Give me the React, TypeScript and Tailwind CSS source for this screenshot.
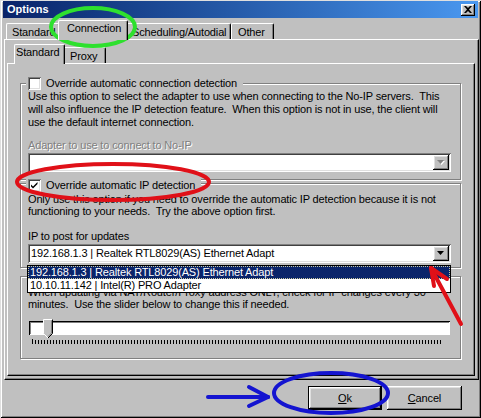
import React from 'react';

const raised =
  'shadow-[inset_-1px_-1px_#000000,inset_1px_1px_#ffffff,inset_-2px_-2px_#808080,inset_2px_2px_#dfdfdf]';
const sunken =
  'shadow-[inset_1px_1px_#808080,inset_-1px_-1px_#ffffff,inset_2px_2px_#404040,inset_-2px_-2px_#dfdfdf]';
const etched = 'border border-[#808080] shadow-[1px_1px_0_#ffffff,inset_1px_1px_0_#ffffff]';

const Tab: React.FC<{ label: string; selected?: boolean; className: string }> = ({ label, selected, className }) => (
  <div
    className={`${className} ${
      selected ? 'relative z-10 h-[20px] -mb-px pt-[1px] bg-[#c0c0c0]' : 'h-[16px] pt-[2px]'
    } border-t border-l border-r border-t-white border-l-white border-r-[#000000] rounded-tl-[2px] rounded-tr-[2px] shadow-[inset_-1px_0_#808080] overflow-hidden whitespace-nowrap`}
  >
    {label}
  </div>
);

const Checkbox: React.FC<{ checked?: boolean }> = ({ checked }) => (
  <div className={`w-[13px] h-[13px] shrink-0 bg-white ${sunken}`}>
    {checked && (
      <svg width="13" height="13" viewBox="0 0 13 13">
        <path d="M3 5.5 L5 7.5 L9.5 3 L9.5 5 L5 9.5 L3 7.5 Z" fill="#000" />
      </svg>
    )}
  </div>
);

const Combo: React.FC<{ value?: string; disabled?: boolean }> = ({ value, disabled }) => (
  <div className={`h-[19px] bg-white ${sunken} flex items-center pl-[3px] pr-[2px]`}>
    <span className="flex-1 whitespace-nowrap overflow-hidden">{value}</span>
    <div className={`w-[16px] h-[15px] bg-[#c0c0c0] ${raised} flex items-center justify-center`}>
      <svg width="8" height="6" viewBox="0 0 8 6">
        {disabled && <path d="M1 1 H8 L4.5 5 Z" fill="#ffffff" />}
        <path d="M0 0 H7 L3.5 4 Z" fill={disabled ? '#808080' : '#000000'} />
      </svg>
    </div>
  </div>
);

const Ticks: React.FC = () => {
  const xs: number[] = [];
  for (let x = 0.5; x <= 411; x += 3) xs.push(x);
  return (
    <svg width="412" height="6" className="ml-[4px]">
      {xs.map((x, i) => (
        <line key={i} x1={x} x2={x} y1={i === 0 ? 0 : 1} y2={5} stroke="#000" strokeWidth="1" />
      ))}
    </svg>
  );
};

export default function App() {
  return (
    <div className="relative w-[481px] h-[418px] overflow-hidden bg-[#c0c0c0] font-['Liberation_Sans',Arial,sans-serif] text-[11px] leading-[13px] tracking-[-0.15px] text-black shadow-[inset_1px_1px_#dfdfdf,inset_-1px_-1px_#000000,inset_2px_2px_#ffffff,inset_-2px_-2px_#808080]">
      {/* title bar */}
      <div className="mx-[3px] mt-[1px] h-[17px] flex items-center justify-between pl-[4px] pr-[3px] bg-linear-to-r from-[#0a246a] to-[#4a98f0]">
        <span className="text-white font-bold tracking-normal">Options</span>
        <div className={`w-[14px] h-[12px] bg-[#c0c0c0] ${raised} flex items-center justify-center`}>
          <svg width="8" height="7" viewBox="0 0 8 7">
            <path d="M0 0 H2 L4 2 L6 0 H8 L5 3.5 L8 7 H6 L4 5 L2 7 H0 L3 3.5 Z" fill="#000" />
          </svg>
        </div>
      </div>

      {/* outer tabs */}
      <div className="flex items-end h-[21px] pl-[6px]">
        <Tab label="Standard" className="w-[54px] pl-[5px]" />
        <Tab label="Connection" selected className="w-[70px] -mx-[2px] pl-[8px]" />
        <Tab label="Scheduling/Autodial" className="w-[105px] pl-[5px]" />
        <Tab label="Other" className="w-[43px] pl-[6px]" />
      </div>

      {/* outer panel */}
      <div className="ml-[4px] w-[475px] h-[341px] flex flex-col border-t border-l border-r border-b border-t-white border-l-white border-r-[#000000] border-b-[#000000] shadow-[inset_-1px_-1px_#808080] pt-[5px] pl-[2px] pr-[3px] pb-[3px]">
        {/* inner tabs */}
        <div className="flex items-end h-[18px] pl-[9px]">
          <Tab label="Standard" selected className="w-[51px] -mx-[2px] pl-[1px]" />
          <Tab label="Proxy" className="w-[43px] pl-[6px]" />
        </div>

        {/* inner panel */}
        <div className="flex-1 flex flex-col border-t border-l border-r border-b border-t-white border-l-white border-r-[#000000] border-b-[#000000] shadow-[inset_-1px_-1px_#808080] pt-[19px] pl-[12px] pr-[13px]">
          {/* group 1 */}
          <div className={`${etched} flex flex-col pl-[7px] pr-[9px] pb-[7px]`}>
            <div className="-mt-[7px] -ml-[2px] self-start flex items-center gap-[5px] bg-[#c0c0c0] pl-[2px] pr-[6px] h-[13px]">
              <Checkbox />
              <span>Override automatic connection detection</span>
            </div>
            <p className="mt-0 leading-[13px] whitespace-nowrap">
              Use this option to select the adapter to use when connecting to the No-IP servers.&nbsp; This
              <br />
              will also influence the IP detection feature.&nbsp; When this option is not in use, the client will
              <br />
              use the default internet connection.
            </p>
            <div className="mt-[10px] text-[#808080] [text-shadow:1px_1px_0_#ffffff]">Adapter to use to connect to No-IP</div>
            <div className="mt-[1px]">
              <Combo disabled />
            </div>
          </div>

          {/* group 2 */}
          <div className={`${etched} mt-[3px] flex flex-col pl-[7px] pr-[9px] pb-[4px]`}>
            <div className="-mt-[5px] -ml-[2px] self-start flex items-center gap-[5px] bg-[#c0c0c0] pl-[2px] pr-[6px] h-[13px]">
              <Checkbox checked />
              <span>Override automatic IP detection</span>
            </div>
            <p className="mt-[1px] leading-[12px] whitespace-nowrap">
              Only use this option if you need to override the automatic IP detection because it is not
              <br />
              functioning to your needs.&nbsp; Try the above option first.
            </p>
            <div className="mt-[13px]">IP to post for updates</div>
            <div className="mt-[1px]">
              <Combo value="192.168.1.3 | Realtek RTL8029(AS) Ethernet Adapt" />
            </div>
          </div>

          {/* group 3 */}
          <div className={`${etched} mt-[8px] flex flex-col pl-[7px] pr-[10px] pb-[13px]`}>
            <p className="mt-[9px] leading-[12px] whitespace-nowrap">
              When updating via NAT/Router/Proxy address ONLY, check for IP changes every 30
              <br />
              minutes.&nbsp; Use the slider below to change this if needed.
            </p>
            <div className="relative mt-[11px] ml-[1px] h-[14px] bg-white shadow-[inset_1px_1px_#000000,inset_-1px_-1px_#ffffff,inset_2px_2px_#808080]">
              <svg width="11" height="20" viewBox="0 0 11 20" className="absolute left-[14px] -top-[2px]">
                <path d="M0.5 0.5 H9.5 V14.5 L5 19 L0.5 14.5 Z" fill="#c0c0c0" stroke="#ffffff" />
                <path d="M9.5 0.5 V14.5 L5 19" fill="none" stroke="#000000" />
                <path d="M8.5 1.5 V14 L5 17.5" fill="none" stroke="#808080" />
              </svg>
            </div>
            <div className="mt-[4px]">
              <Ticks />
            </div>
          </div>
        </div>
      </div>

      {/* buttons */}
      <div className="flex justify-end gap-[5px] pr-[19px] mt-[6px]">
        <div className="w-[74px] h-[24px] border border-black">
          <div className={`w-full h-full ${raised} flex items-center justify-center`}>
            <span>
              <span className="underline">O</span>k
            </span>
          </div>
        </div>
        <div className={`w-[75px] h-[24px] ${raised} flex items-center justify-center`}>
          <span>
            <span className="underline">C</span>ancel
          </span>
        </div>
      </div>

      {/* open dropdown list */}
      <div className="absolute left-[27px] top-[265px] w-[424px] h-[28px] bg-white border border-black flex flex-col">
        <div className="h-[13px] bg-[#0a246a] text-white pl-[2px] outline-1 outline-dotted outline-[#c8c8a0] -outline-offset-1 leading-[13px]">
          192.168.1.3 | Realtek RTL8029(AS) Ethernet Adapt
        </div>
        <div className="h-[13px] pl-[2px] leading-[13px]">10.10.11.142 | Intel(R) PRO Adapter</div>
      </div>

      {/* hand-drawn annotations */}
      <svg className="absolute inset-0 pointer-events-none" width="481" height="418" viewBox="0 0 481 418">
        <ellipse cx="93" cy="27" rx="42" ry="19" fill="none" stroke="#2ee02e" strokeWidth="4" />
        <ellipse cx="113" cy="182" rx="96" ry="18" fill="none" stroke="#e01018" strokeWidth="4" />
        <g stroke="#e01018" strokeWidth="4" strokeLinecap="round" fill="none">
          <path d="M461 324 L431 268" />
          <path d="M431 268 L447 279" />
          <path d="M431 268 L434 286" />
        </g>
        <ellipse cx="331" cy="393" rx="57" ry="20" fill="none" stroke="#1414d0" strokeWidth="4" />
        <g stroke="#1414d0" strokeWidth="4" strokeLinecap="round" fill="none">
          <path d="M208 397 L268 397" />
          <path d="M268 397 L249 387" />
          <path d="M268 397 L249 406" />
        </g>
      </svg>
    </div>
  );
}
